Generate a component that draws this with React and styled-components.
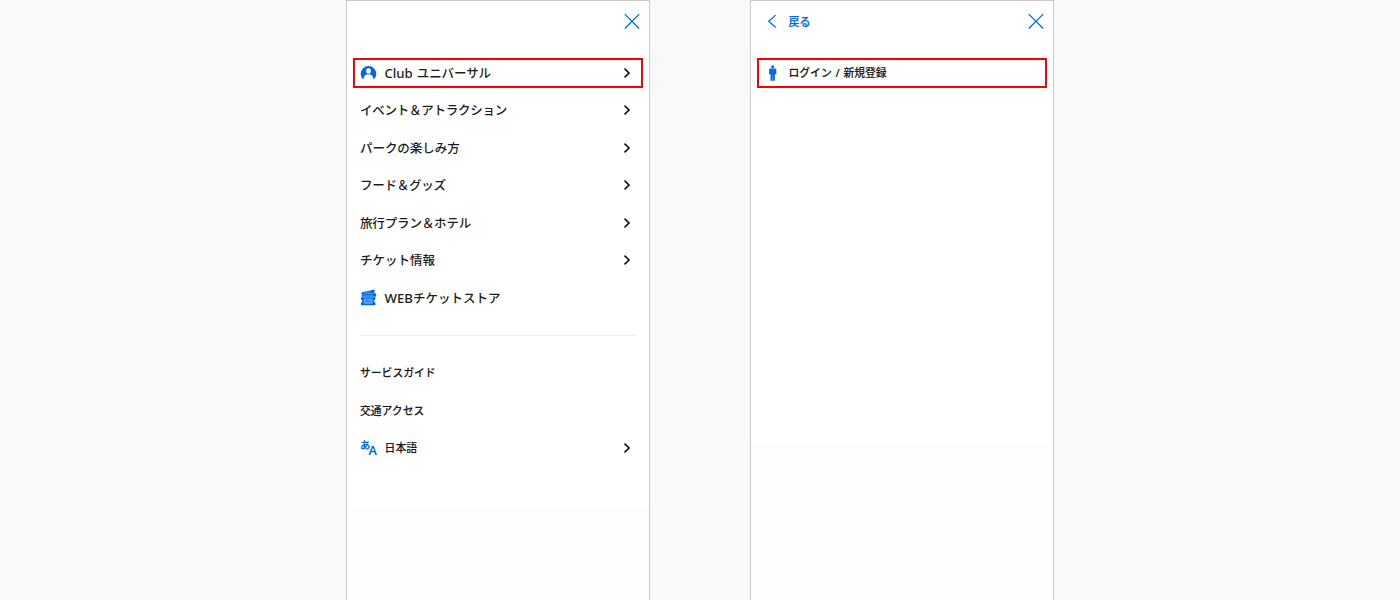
import React from "react";
import styled, { createGlobalStyle } from "styled-components";

const BLUE = "#0068e0";

const GlobalStyle = createGlobalStyle`
  body {
    margin: 0;
    background-color: #f9f9f9;
    font-family: "Noto Sans", "Noto Sans CJK JP", sans-serif;
  }
  * {
    box-sizing: border-box;
  }
`;

const Container = styled.div`
  display: flex;
  justify-content: center;
  gap: 100px;
  height: 600px;
  overflow: hidden;
`;

const Panel = styled.section`
  width: 304px;
  border: 1px solid #cacaca;
  border-bottom: 0;
  background: linear-gradient(#ffffff ${props => props.$fold}px, #fdfdfd 0);
`;

const Header = styled.header`
  display: flex;
  align-items: center;
  justify-content: space-between;
  height: 40px;
  padding: 0 9px 0 13px;
  svg {
    display: block;
  }
`;

const Back = styled.button`
  display: flex;
  align-items: center;
  gap: 7.5px;
  padding: 0;
  border: 0;
  background: none;
  color: ${BLUE};
  font-family: "Noto Sans CJK JP", sans-serif;
  font-size: 11px;
  font-weight: 500;
  line-height: 16px;
  -webkit-text-stroke: 0.25px;
`;

const Close = styled.button`
  margin-left: auto;
  padding: 0;
  border: 0;
  background: none;
`;

const Menu = styled.ul`
  margin: 0;
  padding: 13.25px 13px 0;
  list-style: none;
`;

const Row = styled.li`
  position: relative;
  display: flex;
  align-items: center;
  height: 37.5px;
  color: #1c1c1c;
  font-size: ${props => (props.$small ? "10.8px" : "12.5px")};
  font-weight: 500;
  line-height: 20px;
  white-space: nowrap;
`;

const Label = styled.span`
  padding-top: ${props => (props.$small ? 0 : "1px")};
  letter-spacing: ${props => props.$tracking || 0}px;
  word-spacing: 1px;
  -webkit-text-stroke: ${props => (props.$small ? "0.15px" : 0)};
`;

const Roman = styled.span`
  font-size: 13.2px;
  line-height: 1;
`;

const Highlight = styled.span`
  position: absolute;
  top: 3.75px;
  left: -7px;
  width: 290px;
  height: 30px;
  border: 2px solid #fa0000;
`;

const IconBox = styled.span`
  display: flex;
  width: 17px;
  margin-right: 7.5px;
  margin-bottom: 1px;
  color: ${BLUE};
`;

const Arrow = styled.span`
  display: flex;
  margin-left: auto;
  margin-right: 5px;
  margin-bottom: 0.5px;
`;

const Divider = styled.hr`
  width: 276px;
  height: 1px;
  margin: 18.25px 0 18.25px;
  border: 0;
  background-color: #e9eef3;
`;

const CloseIcon = () => (
  <svg width="16" height="16" viewBox="0 0 16 16" fill="none" stroke={BLUE} strokeWidth="1.25">
    <path d="M.8 1.1l14.4 14.4M15.2 1.1L.8 15.5" />
  </svg>
);

const BackIcon = () => (
  <svg width="17" height="16" viewBox="0 0 17 16" fill="none" stroke={BLUE} strokeWidth="1.25">
    <path d="M11.7 2.1L4.7 8.3l7 6.2" />
  </svg>
);

const ChevronIcon = () => (
  <svg width="8" height="10" viewBox="0 0 8 10" fill="none" stroke="#151515" strokeWidth="1.7">
    <path d="M1.5.7L6 5 1.5 9.3" />
  </svg>
);

const UserIcon = () => (
  <svg width="17" height="16" viewBox="0 0 17 16" fill="currentColor">
    <path d="M3.4 14.8A7.8 7.8 0 1 1 13.6 14.8C13.4 12 12.4 10.2 9.8 9.3L8.5 9.6 7.2 9.3C4.6 10.2 3.6 12 3.4 14.8Z" />
    <ellipse cx="8.5" cy="6" rx="2.4" ry="2.8" fill="#fff" />
  </svg>
);

const TicketIcon = () => (
  <svg width="17" height="17" viewBox="0 0 17 17" fill="currentColor">
    <path d="M1.3 3.6L14.3.5l.6 2-1 .8.9.8-13.1 1.1z" />
    <path d="M1.2 5.4l14.4-1.5.8 3.1-1 .8H1.2l.9-1.1z" />
    <path d="M1 8.2h14.4v2.2a1.7 1.7 0 0 0 0 3.3v2.5H1v-2.5a1.7 1.7 0 0 0 0-3.3z" />
    <path d="M4.2 4.1l6.5-1.4M4.3 6.8l9-.8" stroke="#6fa9f0" strokeWidth=".6" />
    <path d="M4.2 10.2h8v4h-8z" fill="#3d8bee" stroke="#9cc5f8" strokeWidth=".7" />
  </svg>
);

const PersonIcon = () => (
  <svg width="17" height="16" viewBox="0 0 17 16" fill="currentColor">
    <circle cx="8.7" cy="1.7" r="1.5" />
    <path d="M6.4 3.5h4.6c.9 0 1.3.5 1.3 1.3v4.5h-1.4v6.4H6.5V9.3H5.1V4.8c0-.8.4-1.3 1.3-1.3z" />
    <path d="M8.7 10v5.7" stroke="#8fbcf5" strokeWidth=".6" />
  </svg>
);

const Language = styled.span`
  display: flex;
  flex-direction: column;
  width: 17px;
  padding-top: 1.5px;
  line-height: 6.5px;
`;

const Kana = styled.span`
  font-size: 10.5px;
  font-weight: 700;
`;

const Latin = styled.span`
  align-self: flex-end;
  font-size: 12.5px;
  font-weight: 600;
`;

const LanguageIcon = () => (
  <Language>
    <Kana>あ</Kana>
    <Latin>A</Latin>
  </Language>
);

const Item = ({ icon, arrow, small, highlighted, tracking, children }) => (
  <Row $small={small}>
    {icon && <IconBox>{icon}</IconBox>}
    <Label $small={small} $tracking={tracking}>
      {children}
    </Label>
    {arrow && (
      <Arrow>
        <ChevronIcon />
      </Arrow>
    )}
    {highlighted && <Highlight />}
  </Row>
);

const App = () => (
  <>
    <GlobalStyle />
    <Container lang="ja">
      <Panel $fold={508}>
        <Header>
          <Close aria-label="閉じる">
            <CloseIcon />
          </Close>
        </Header>
        <Menu>
          <Item icon={<UserIcon />} arrow highlighted tracking={-0.1}>
            <Roman>Club </Roman>ユニバーサル
          </Item>
          <Item arrow tracking={-0.25}>
            イベント＆アトラクション
          </Item>
          <Item arrow tracking={-0.05}>
            パークの楽しみ方
          </Item>
          <Item arrow tracking={-0.25}>
            フード＆グッズ
          </Item>
          <Item arrow tracking={-0.15}>
            旅行プラン＆ホテル
          </Item>
          <Item arrow>チケット情報</Item>
          <Item icon={<TicketIcon />}>
            <Roman>WEB</Roman>チケットストア
          </Item>
          <Divider as="li" />
          <Item small>サービスガイド</Item>
          <Item small>交通アクセス</Item>
          <Item icon={<LanguageIcon />} small arrow tracking={0.1}>
            日本語
          </Item>
        </Menu>
      </Panel>
      <Panel $fold={442}>
        <Header>
          <Back>
            <BackIcon />
            戻る
          </Back>
          <Close aria-label="閉じる">
            <CloseIcon />
          </Close>
        </Header>
        <Menu>
          <Item icon={<PersonIcon />} small highlighted>
            ログイン / 新規登録
          </Item>
        </Menu>
      </Panel>
    </Container>
  </>
);

export default App;
